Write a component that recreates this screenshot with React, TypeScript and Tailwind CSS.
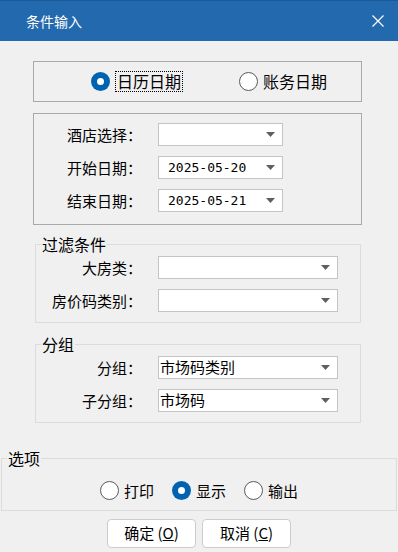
import { type ReactNode } from "react";
import clsx from "clsx";

function Radio({ checked = false }: { checked?: boolean }) {
  if (checked) {
    return (
      <span className="flex h-[19px] w-[19px] shrink-0 items-center justify-center rounded-full bg-[#0063b1]">
        <span className="block h-[7px] w-[7px] rounded-full bg-white" />
      </span>
    );
  }
  return <span className="block h-[19px] w-[19px] shrink-0 rounded-full border border-[#5a5a5a] bg-white" />;
}

function Combo({ width, value, mono = false }: { width: string; value?: string; mono?: boolean }) {
  return (
    <div className={clsx("flex h-[23px] items-center border border-[#c4c4c4] bg-white", width)}>
      <span
        className={clsx(
          "flex-1 truncate",
          mono ? "pl-[9px] font-['DejaVu_Sans_Mono',monospace] text-[13px]" : "pl-[1px] text-[15px]",
        )}
      >
        {value}
      </span>
      <svg width="9" height="5" viewBox="0 0 9 5" className="mr-[7px] shrink-0">
        <path d="M0 0H9L4.5 5Z" fill="#5b6359" />
      </svg>
    </div>
  );
}

function Row({ label, labelW, children }: { label: string; labelW: string; children: ReactNode }) {
  return (
    <div className="flex items-center">
      <span className={clsx("text-right text-[15px] leading-[20px]", labelW)}>{label}</span>
      <div className="ml-[16px]">{children}</div>
    </div>
  );
}

function Group({ title, className, children }: { title: string; className: string; children: ReactNode }) {
  return (
    <fieldset className={clsx("border border-[#dcdcdc] p-0", className)}>
      <legend className="ml-[5px] px-[1px] text-[16px] leading-[16px]">{title}</legend>
      {children}
    </fieldset>
  );
}

const OPTIONS = [
  { label: "打印", on: false },
  { label: "显示", on: true },
  { label: "输出", on: false },
];

export default function App() {
  return (
    <div className="h-[552px] w-[398px] overflow-hidden bg-[#f0f0f0] font-['Noto_Sans_CJK_SC',sans-serif] text-black">
      <header className="flex h-[41px] items-center justify-between border-t border-[#1b5a98] bg-[#2369ad] pl-[26px] pr-[14px] text-[14px] text-white">
        <span>条件输入</span>
        <svg width="12" height="12" viewBox="0 0 12 12">
          <path d="M0.5 0.5L11.5 11.5M11.5 0.5L0.5 11.5" stroke="white" strokeWidth="1.2" />
        </svg>
      </header>

      <div className="ml-[33px] mt-[20px] flex h-[41px] w-[329px] items-center border border-[#a9a9a9] pl-[57px]">
        <Radio checked />
        <span className="ml-[5px] border border-dotted border-black px-[1px] text-[16px] leading-[19px]">日历日期</span>
        <div className="ml-[56px] flex items-center">
          <Radio />
          <span className="ml-[5px] text-[16px] leading-[19px]">账务日期</span>
        </div>
      </div>

      <div className="ml-[33px] mt-[11px] flex w-[329px] flex-col gap-[10px] border border-[#a9a9a9] pb-[12px] pt-[9px]">
        <Row label="酒店选择：" labelW="w-[108px]">
          <Combo width="w-[125px]" />
        </Row>
        <Row label="开始日期：" labelW="w-[108px]">
          <Combo width="w-[125px]" value="2025-05-20" mono />
        </Row>
        <Row label="结束日期：" labelW="w-[108px]">
          <Combo width="w-[125px]" value="2025-05-21" mono />
        </Row>
      </div>

      <Group title="过滤条件" className="ml-[35px] mt-[11px] w-[326px] pb-[10px]">
        <div className="flex flex-col gap-[10px] pt-[4px]">
          <Row label="大房类：" labelW="w-[106px]">
            <Combo width="w-[180px]" />
          </Row>
          <Row label="房价码类别：" labelW="w-[106px]">
            <Combo width="w-[180px]" />
          </Row>
        </div>
      </Group>

      <Group title="分组" className="ml-[35px] mt-[13px] w-[326px] pb-[10px]">
        <div className="flex flex-col gap-[10px] pt-[4px]">
          <Row label="分组：" labelW="w-[106px]">
            <Combo width="w-[180px]" value="市场码类别" />
          </Row>
          <Row label="子分组：" labelW="w-[106px]">
            <Combo width="w-[180px]" value="市场码" />
          </Row>
        </div>
      </Group>

      <Group title="选项" className="ml-[1px] mt-[27px] w-[396px] pb-[10px]">
        <div className="mt-[15px] flex h-[19px] items-center justify-center gap-[18px]">
          {OPTIONS.map((o) => (
            <div key={o.label} className="flex items-center">
              <Radio checked={o.on} />
              <span className="ml-[5px] text-[15px] leading-[19px]">{o.label}</span>
            </div>
          ))}
        </div>
      </Group>

      <div className="mt-[8px] flex justify-center gap-[6px]">
        <button className="flex h-[29px] w-[89px] items-center justify-center rounded-[4px] border border-[#cccccc] bg-white text-[15px]">
          确定 (<span className="underline">O</span>)
        </button>
        <button className="flex h-[29px] w-[89px] items-center justify-center rounded-[4px] border border-[#cccccc] bg-white text-[15px]">
          取消 (<span className="underline">C</span>)
        </button>
      </div>
    </div>
  );
}
